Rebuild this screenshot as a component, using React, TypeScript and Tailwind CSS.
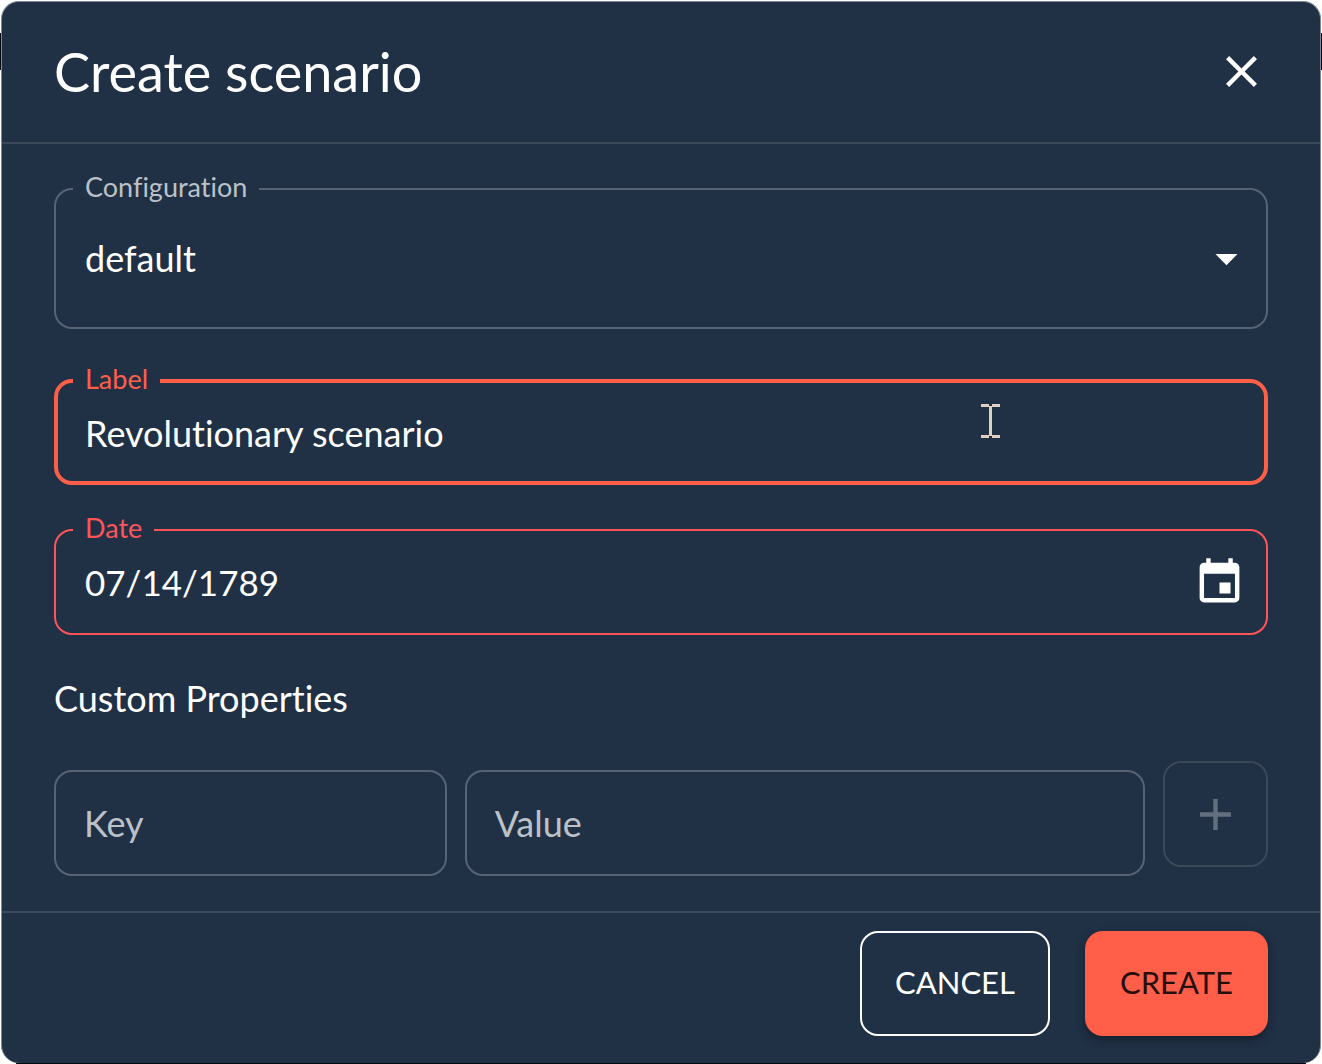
import { useState } from "react";
import type { ReactNode } from "react";
import { MdAdd, MdArrowDropDown, MdClose, MdEvent } from "react-icons/md";

const tones = {
  neutral: { box: "border-2 border-[#576373] px-[17px] pb-[14px]", label: "text-[#bcc1c7]" },
  active: { box: "border-4 border-[#ff5f49] px-[15px] pb-[10px]", label: "text-[#ff5f49]" },
  error: { box: "border-2 border-[#ff5459] px-[17px] pb-[13px]", label: "text-[#ff5459]" },
};

function OutlinedField({
  id,
  label,
  tone,
  children,
}: {
  id: string;
  label: string;
  tone: keyof typeof tones;
  children: ReactNode;
}) {
  return (
    <fieldset className={`min-w-0 rounded-[18px] ${tones[tone].box}`}>
      <legend className={`px-3 pb-1 text-[27px] leading-6 ${tones[tone].label}`}>
        <label htmlFor={id}>{label}</label>
      </legend>
      <div className="relative flex items-center pl-3">{children}</div>
    </fieldset>
  );
}

function TextCursor() {
  return (
    <svg
      className="pointer-events-none absolute top-[9px] right-[249px] h-[34px] w-[19px]"
      viewBox="0 0 19 34"
      fill="#dfd0c2"
      aria-hidden="true"
    >
      <path d="M0 0h8v2h3V0h8v3h-8v28h8v3h-8v-2H8v2H0v-3h8V3H0z" />
    </svg>
  );
}

const inputText = "min-w-0 flex-1 bg-transparent text-white outline-none";
const propertyInput =
  "h-[106px] w-full min-w-0 rounded-[18px] border-2 border-[#576373] bg-transparent px-7 text-4xl text-white outline-none placeholder:text-[#bcc1c7]";

export default function App() {
  const [label, setLabel] = useState("Revolutionary scenario");
  const [date, setDate] = useState("07/14/1789");

  return (
    <div className="relative bg-white px-px pt-px font-['Lato',sans-serif] text-white [font-variant-ligatures:no-common-ligatures]">
      <div className="absolute top-[33px] left-0 h-[37px] w-px bg-[#05080c]" />
      <div className="absolute top-[33px] right-0 h-[37px] w-px bg-[#05080c]" />
      <form
        role="dialog"
        aria-labelledby="dialog-title"
        className="rounded-[18px] border-x border-t border-[#7f8a96] bg-[#203045]"
        onSubmit={(e) => e.preventDefault()}
      >
        <header className="flex h-[142px] items-center justify-between border-b-2 border-[#3b4958] px-[52px]">
          <h1 id="dialog-title" className="text-[54px] leading-[72px]">
            Create scenario
          </h1>
          <button type="button" aria-label="Close" className="pb-0.5">
            <MdClose className="size-[53px]" />
          </button>
        </header>

        <div className="px-[52px] pt-[31px] pb-[35px]">
          <OutlinedField id="configuration" label="Configuration" tone="neutral">
            <select
              id="configuration"
              className={`h-[110px] appearance-none text-4xl ${inputText}`}
              defaultValue="default"
            >
              <option value="default">default</option>
            </select>
            <MdArrowDropDown className="pointer-events-none absolute -right-1 size-[53px]" />
          </OutlinedField>

          <div className="mt-[38px]">
            <OutlinedField id="label" label="Label" tone="active">
              <input
                id="label"
                className={`h-[76px] text-4xl ${inputText}`}
                value={label}
                onChange={(e) => setLabel(e.target.value)}
              />
              <TextCursor />
            </OutlinedField>
          </div>

          <div className="mt-[31px]">
            <OutlinedField id="date" label="Date" tone="error">
              <input
                id="date"
                className={`h-[76px] text-[35px] ${inputText}`}
                value={date}
                onChange={(e) => setDate(e.target.value)}
              />
              <button type="button" aria-label="Choose date" className="pr-[3px]">
                <MdEvent className="size-[53px]" />
              </button>
            </OutlinedField>
          </div>

          <h2 className="mt-[39px] text-4xl leading-[48px]">Custom Properties</h2>

          <div className="mt-[39px] grid grid-cols-[393fr_681fr_105px] gap-x-[18px]">
            <input aria-label="Key" placeholder="Key" className={`mt-[9px] ${propertyInput}`} />
            <input aria-label="Value" placeholder="Value" className={`mt-[9px] ${propertyInput}`} />
            <button
              type="button"
              disabled
              aria-label="Add property"
              className="flex h-[106px] items-center justify-center rounded-[18px] border-2 border-[#3b4958] text-[#636f7d]"
            >
              <MdAdd className="size-[53px]" />
            </button>
          </div>
        </div>

        <footer className="flex justify-end gap-[35px] border-t-2 border-[#3b4958] px-[52px] pt-[18px] pb-[27px]">
          <button
            type="button"
            className="h-[105px] rounded-[18px] border-2 border-white px-[33px] pb-0.5 text-[31px]"
          >
            CANCEL
          </button>
          <button
            type="submit"
            className="h-[105px] rounded-[18px] bg-[#ff5f49] px-[35px] pb-0.5 text-[31px] text-[#260e0b] shadow-[0_4px_10px_rgba(0,0,0,0.35)]"
          >
            CREATE
          </button>
        </footer>
      </form>
      <div className="mx-[15px] h-px bg-[#05080c]" />
    </div>
  );
}
